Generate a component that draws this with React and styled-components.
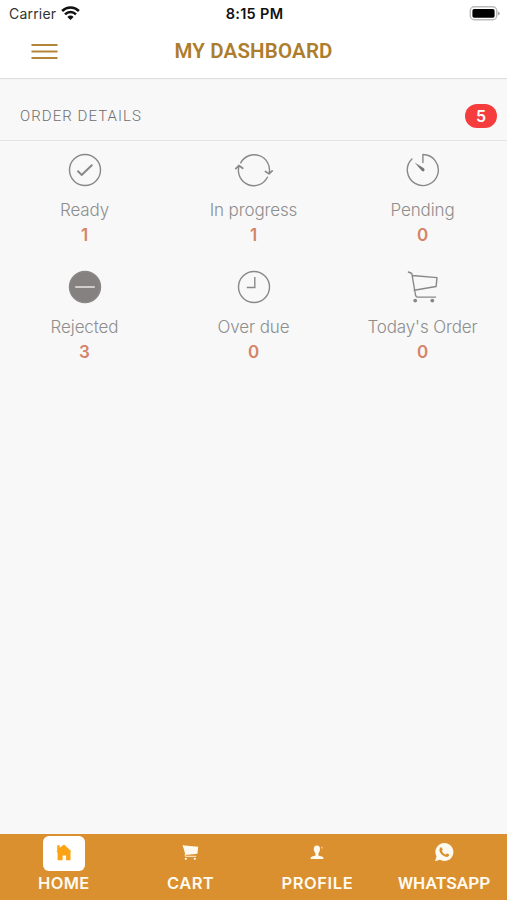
import React from "react";
import styled, { createGlobalStyle } from "styled-components";

const GlobalStyle = createGlobalStyle`
  * {
    box-sizing: border-box;
  }
  body {
    margin: 0;
    background: #f8f8f8;
    font-family: Inter, "Liberation Sans", sans-serif;
  }
`
const Screen = styled.div`
  width: 100%;
  height: 100vh;
  display: flex;
  flex-direction: column;
  background: #f8f8f8;
`
const StatusBar = styled.div`
  height: 27px;
  display: grid;
  grid-template-columns: 1fr auto 1fr;
  align-items: center;
  padding: 0 7px 0 9px;
  background: #fff;
  color: #111;
  font-size: 14px;
  line-height: 27px;
`
const Carrier = styled.div`
  display: flex;
  align-items: center;
  gap: 5px;
  color: #333;
  letter-spacing: 0.2px;
  svg {
    margin-bottom: 2px;
  }
`
const Time = styled.div`
  font-size: 14.5px;
  font-weight: 600;
  letter-spacing: 0.3px;
`
const Battery = styled.div`
  display: flex;
  justify-content: flex-end;
`
const Header = styled.header`
  height: 51px;
  display: grid;
  grid-template-columns: 88px 1fr 88px;
  align-items: center;
  padding-bottom: 3px;
  background: #fff;
  box-shadow: 0 1px 1px #dedede;
`
const MenuButton = styled.button`
  display: flex;
  width: 58px;
  padding: 1px 0 0 31px;
  border: 0;
  background: none;
`
const Title = styled.h1`
  margin: 0;
  text-align: center;
  color: #ad7d2e;
  font-family: Roboto, sans-serif;
  font-size: 20.5px;
  font-weight: 600;
  line-height: 24px;
  letter-spacing: 0.17px;
`
const SectionHead = styled.div`
  height: 63px;
  display: flex;
  align-items: center;
  justify-content: space-between;
  padding: 13px 10px 0 20px;
  border-bottom: 1px solid #e3e3e3;
`
const SectionTitle = styled.h2`
  margin: 1px 0 0;
  color: #6e6e6e;
  font-family: Roboto, sans-serif;
  font-size: 15px;
  font-weight: 350;
  letter-spacing: 1.05px;
`
const Badge = styled.span`
  width: 32px;
  height: 24px;
  border-radius: 12px;
  background: #f53d3d;
  color: #fff;
  font-size: 16px;
  font-weight: 600;
  line-height: 24px;
  text-align: center;
`
const Orders = styled.div`
  flex: 1;
  display: grid;
  grid-template-columns: repeat(3, 1fr);
  grid-auto-rows: 117px;
  align-content: start;
  padding-top: 11px;
`
const Card = styled.div`
  display: flex;
  flex-direction: column;
  align-items: center;
`
const Label = styled.span`
  margin-top: 11px;
  color: #8e8e8e;
  font-size: 17px;
  font-weight: 300;
  line-height: 22px;
  letter-spacing: -0.12px;
  white-space: nowrap;
`
const Count = styled.span`
  margin-top: 3px;
  color: #d58468;
  font-size: 17px;
  font-weight: 600;
  line-height: 22px;
`
const LineIcon = styled.svg`
  width: 40px;
  height: 36px;
  fill: none;
  stroke: #8a8887;
  stroke-width: 1.4;
  stroke-linecap: round;
  stroke-linejoin: round;
`
const TabBar = styled.nav`
  height: 66px;
  display: grid;
  grid-template-columns: repeat(4, 1fr);
  background: #da902f;
`
const Tab = styled.div`
  display: flex;
  flex-direction: column;
  align-items: center;
  padding-top: 2px;
  color: #fffaf0;
`
const TabIcon = styled.div`
  width: 42px;
  height: 35px;
  display: flex;
  align-items: center;
  justify-content: center;
  margin-left: ${(props) => (props.$active ? 2 : 0)}px;
  padding-bottom: 3px;
  border-radius: 6px;
  background: ${(props) => (props.$active ? "#fff" : "transparent")};
  color: ${(props) => (props.$active ? "#fba314" : "#fffaf0")};
`
const TabLabel = styled.span`
  margin-top: 1px;
  padding-left: 1px;
  font-family: ${(props) => (props.$roboto ? "Roboto" : "Inter")}, sans-serif;
  font-size: ${(props) => (props.$roboto ? 17.2 : 16.5)}px;
  font-weight: 600;
  line-height: 22px;
  letter-spacing: ${(props) => props.$spacing || 0}px;
`

const icons = {
  ready: (
    <>
      <circle cx="20" cy="18" r="15.5" />
      <path d="M13 19.2l3.6 3.7 10.2-9.6" strokeWidth="2" />
    </>
  ),
  progress: (
    <>
      <path d="M6.7 10.8A15.3 15.3 0 0 1 35.2 21M33.4 25.2A15.3 15.3 0 0 1 4.9 14.5" />
      <path d="M1.8 16.7l3.1-3.2 3.8 2.8M31.4 19.4l3.6 2.5 3.2-3.1" strokeWidth="1.7" />
    </>
  ),
  pending: (
    <>
      <path d="M19.9 10.6V2.5A15.5 15.5 0 1 1 8.9 7" />
      <path d="M11.6 10.4l9.3 5.9q1.6 1.9-.2 3.3l-1.8-.5z" fill="#777" stroke="none" />
    </>
  ),
  rejected: (
    <>
      <circle cx="20" cy="18" r="15.5" fill="#858180" />
      <path d="M10.7 18h18.6" stroke="#e8e5e4" />
    </>
  ),
  overdue: (
    <>
      <circle cx="20" cy="18" r="15.5" />
      <path d="M20.8 8v10.5h-8" strokeLinecap="butt" strokeLinejoin="miter" />
    </>
  ),
  cart: (
    <>
      <path d="M5.4 3l3.4 1.5 3.8 22q.5 1.6 2 1.6h18M9.2 6.5l24.8 2.1-.9 8.9-22 3.7" />
      <circle cx="12.2" cy="31.6" r="1.9" fill="#8a8887" stroke="none" />
      <circle cx="29.3" cy="31.6" r="1.9" fill="#8a8887" stroke="none" />
    </>
  ),
}

const orders = [
  { label: "Ready", count: 1, icon: "ready" },
  { label: "In progress", count: 1, icon: "progress" },
  { label: "Pending", count: 0, icon: "pending" },
  { label: "Rejected", count: 3, icon: "rejected" },
  { label: "Over due", count: 0, icon: "overdue" },
  { label: "Today's Order", count: 0, icon: "cart" },
]

const Wifi = () => (
  <svg width="19" height="14" viewBox="0 0 19 14" fill="none" stroke="#111" strokeWidth="2.5">
    <path d="M1.1 5a12 12 0 0 1 16.8 0M4 8.3a7.9 7.9 0 0 1 11 0" />
    <path d="M6.4 10.9a4.3 4.3 0 0 1 6.2 0L9.5 14z" fill="#111" stroke="none" />
  </svg>
)
const BatteryIcon = () => (
  <svg width="31" height="15" viewBox="0 0 31 15">
    <rect x="1.3" y=".8" width="26.4" height="13" rx="4" fill="#fff" stroke="#bbb" strokeWidth="1.4" />
    <rect x="3.4" y="2.9" width="22.2" height="8.9" rx="1.8" fill="#000" />
    <path d="M28.8 5.2q2 1 2 2.2t-2 2.2z" fill="#aaa" />
  </svg>
)
const Burger = () => (
  <svg width="27" height="17" viewBox="0 0 27 17" stroke="#b3853b" strokeWidth="2">
    <path d="M.5 2h26M.5 8.5h26M.5 15h26" />
  </svg>
)
const HomeIcon = () => (
  <svg width="16" height="17" viewBox="0 0 16 17" fill="currentColor">
    <path d="M1.2 1.3h2.5v2.4L8 .6l7 6.4-.5 1v8.2h-4.4v-4.6H6.6v4.6H1.6V8.4L.6 7.5l.6-.8z" />
  </svg>
)
const CartIcon = () => (
  <svg width="17" height="17" viewBox="0 0 17 17">
    <path d="M.6.9l2 .5 13.6 1.4-.8 7L3.5 11z" fill="currentColor" />
    <path d="M3.1 10.5l.3 1.8h10.8" fill="none" stroke="currentColor" strokeWidth=".9" />
    <circle cx="3.8" cy="14.8" r="1.1" fill="currentColor" />
    <circle cx="12.8" cy="14.8" r="1.1" fill="currentColor" />
  </svg>
)
const ProfileIcon = () => (
  <svg width="14" height="15" viewBox="0 0 14 15" fill="currentColor">
    <path d="M6.9.4c2.2 0 3.3 1.4 3.1 3.7-.1 2-.7 3.4-1.6 4.2v2.2c1.4.8 4.6.8 5 2.2v1.3H.6v-1.3c.4-1.4 3.5-1.4 4.9-2.2V8.3c-1-.8-1.6-2.2-1.7-4.2C3.6 1.8 4.7.4 6.9.4z" />
    <path d="M11 1.8h1.6v1.6H11z" opacity=".55" />
  </svg>
)
const WhatsAppIcon = () => (
  <svg width="20" height="20" viewBox="0 0 20 20">
    <path d="M10.3 1a9 9 0 1 1-4.4 16.8L1 19.2l1.5-4.8A9 9 0 0 1 10.3 1z" fill="currentColor" />
    <path d="M6.3 5.7c.7-.8 1.5-.6 1.8.2l.6 1.6c.1.6-.7 1-.8 1.4.8 1.7 2 2.8 3.7 3.5.5-.1.9-1.2 1.5-1l1.8.9c.6.3.2 1.5-.4 2-1.5 1.2-3.7.4-5.4-.7-1.7-1.2-3.2-3-3.6-4.9-.2-1.2.1-2.2.8-3z" fill="#da902f" />
  </svg>
)

export default () => {
  return (<>
    <GlobalStyle />
    <Screen>
      <StatusBar>
        <Carrier>Carrier <Wifi /></Carrier>
        <Time>8:15 PM</Time>
        <Battery><BatteryIcon /></Battery>
      </StatusBar>
      <Header>
        <MenuButton aria-label="Menu"><Burger /></MenuButton>
        <Title>MY DASHBOARD</Title>
      </Header>
      <SectionHead>
        <SectionTitle>ORDER DETAILS</SectionTitle>
        <Badge>5</Badge>
      </SectionHead>
      <Orders>
        {orders.map((order) => (
          <Card key={order.label}>
            <LineIcon viewBox="0 0 40 36">{icons[order.icon]}</LineIcon>
            <Label>{order.label}</Label>
            <Count>{order.count}</Count>
          </Card>
        ))}
      </Orders>
      <TabBar>
        <Tab>
          <TabIcon $active><HomeIcon /></TabIcon>
          <TabLabel $spacing={0.35}>HOME</TabLabel>
        </Tab>
        <Tab>
          <TabIcon><CartIcon /></TabIcon>
          <TabLabel $spacing={0.4}>CART</TabLabel>
        </Tab>
        <Tab>
          <TabIcon><ProfileIcon /></TabIcon>
          <TabLabel $spacing={0.6}>PROFILE</TabLabel>
        </Tab>
        <Tab>
          <TabIcon><WhatsAppIcon /></TabIcon>
          <TabLabel $roboto>WHATSAPP</TabLabel>
        </Tab>
      </TabBar>
    </Screen>
  </>)
}
